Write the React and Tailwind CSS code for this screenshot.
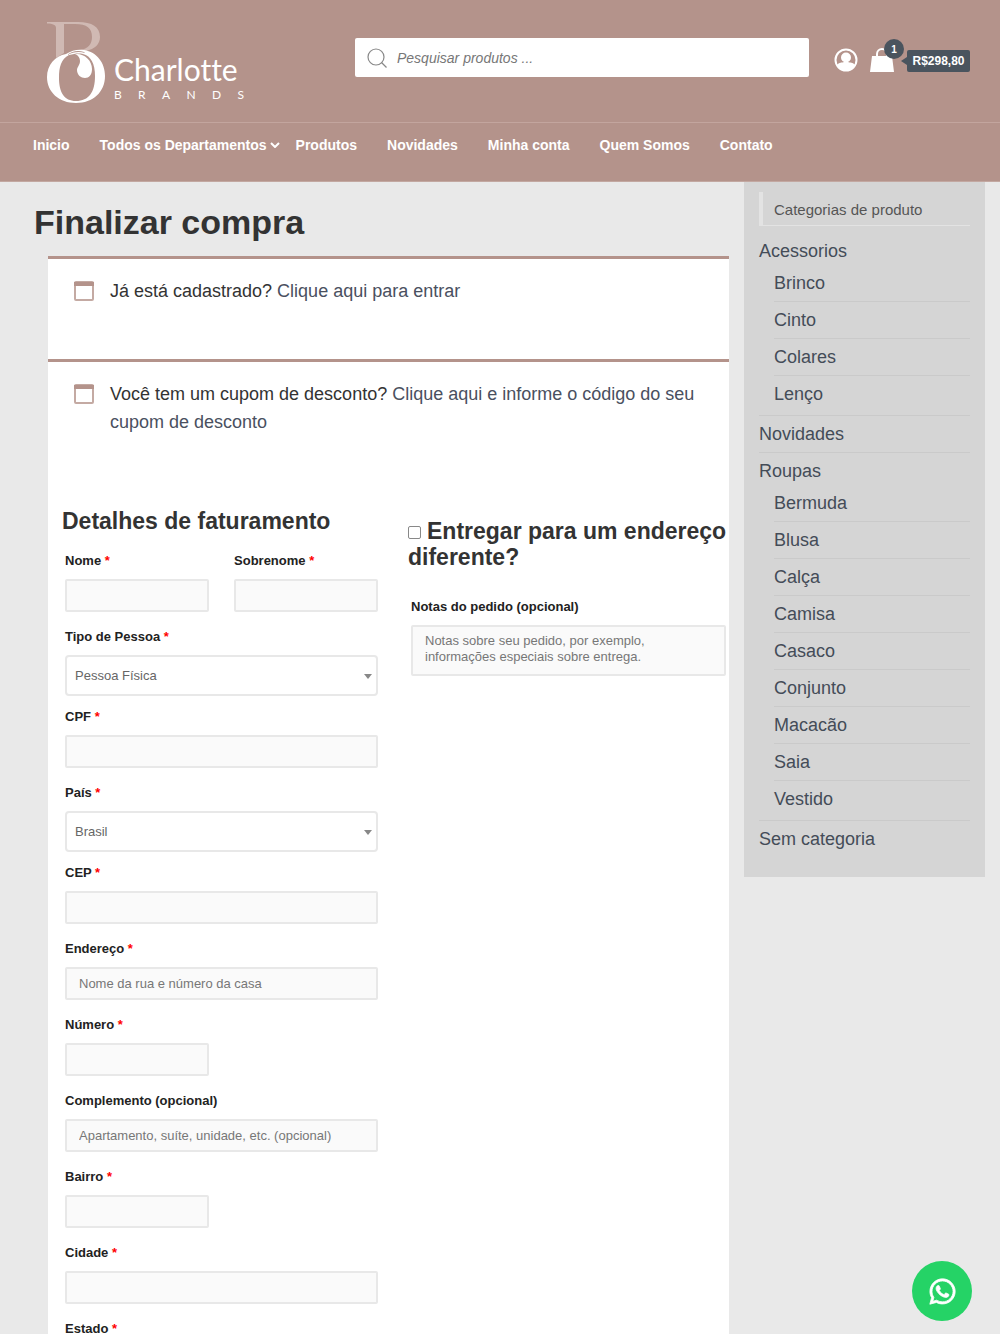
import React from "react";
import { FaWhatsapp } from "react-icons/fa";

const navItems = ["Inicio", "Todos os Departamentos", "Produtos", "Novidades", "Minha conta", "Quem Somos", "Contato"];

const categories = [
  { name: "Acessorios", children: ["Brinco", "Cinto", "Colares", "Lenço"] },
  { name: "Novidades" },
  {
    name: "Roupas",
    children: ["Bermuda", "Blusa", "Calça", "Camisa", "Casaco", "Conjunto", "Macacão", "Saia", "Vestido"],
  },
  { name: "Sem categoria" },
];

function Logo() {
  return (
    <a href="#inicio" aria-label="Charlotte Brands" className="flex w-[200px] shrink-0 text-white">
      <svg width="60" height="86" viewBox="0 0 60 86" aria-hidden="true" className="shrink-0">
        <path
          fill="#d0b9b3"
          d="M0 2h31C45 2 53 7 53 17c0 7-5 12-14 14l-6-1c8-1 12-6 12-13C45 8 40 4 28 4H17v29l-8 5V8C9 5 6 3.500 0 3.500Z"
        />
        <path
          fill="white"
          fillRule="evenodd"
          d="M19 34C25 30 31 29 37 30 50 32 58 43 58 56 58 72 46 83 29 83S0 72 0 57C0 45 8 36 19 34ZM22 35C14 39 12 47 12 58c0 14 5 23 17 23 13 0 19-9 19-25 0-12-4-20-12-22-5-1-9 0-14 1Z"
        />
        <path fill="#b4938b" d="M20 35c6-3 12-4 18-2l-1-1c-6-2-12-1-17 3Z" />
        <path fill="white" d="M28 34c9-1 17 6 17 15 0 6-3 9-7 9s-8-3-8-8c0-3 3-5 3-9 0-3-2-6-5-7Z" />
      </svg>
      <span className="flex flex-col pt-[31px] pl-[7px]">
        <span className="font-['Lato'] text-[30px] leading-9 [font-variant-ligatures:none]">Charlotte</span>
        <span className="flex w-[130px] justify-between font-['Lato'] text-xs leading-[15px]">
          {["B", "R", "A", "N", "D", "S"].map((c) => (
            <span key={c}>{c}</span>
          ))}
        </span>
      </span>
    </a>
  );
}

function Header() {
  return (
    <header className="border-b border-[#c3a8a1] bg-[#b4938b] text-white">
      <div className="flex h-[123px] items-start border-b border-[#c3a59e] pr-[30px] pl-[47px]">
        <div className="w-[308px] shrink-0 pt-5">
          <Logo />
        </div>
        <form className="mt-[38px] flex h-[39px] flex-1 items-center rounded-xs bg-white px-3">
          <svg width="20" height="20" viewBox="0 0 20 20" fill="none" stroke="#888" strokeWidth="1.200" aria-hidden="true">
            <circle cx="9" cy="9" r="8" />
            <path d="M14.500 14.500 19.500 19.500" />
          </svg>
          <input
            type="search"
            aria-label="Pesquisar produtos"
            placeholder="Pesquisar produtos ..."
            className="ml-[10px] min-w-0 flex-1 text-sm text-gray-700 italic outline-none placeholder:text-[#777]"
          />
        </form>
        <a href="#conta" aria-label="Minha conta" className="mt-12 ml-[25px]">
          <svg width="24" height="24" viewBox="0 0 24 24" aria-hidden="true">
            <circle cx="12" cy="12" r="10.500" fill="none" stroke="white" strokeWidth="2" />
            <circle cx="12" cy="9.500" r="5" fill="white" />
            <path fill="white" d="M3 17c2-3 5-2 7-3h4c2 1 5 0 7 3-2 4-5 6-9 6s-7-2-9-6Z" />
          </svg>
        </a>
        <a href="#carrinho" aria-label="Carrinho" className="relative mt-[47px] ml-3 flex">
          <svg width="24" height="26" viewBox="0 0 24 26" aria-hidden="true">
            <path d="M7 10V7a5 5 0 0 1 10 0v3" fill="none" stroke="white" strokeWidth="2" />
            <path d="M2 9h20l2 16H0Z" fill="white" />
          </svg>
          <span className="absolute -top-2 left-[14px] flex size-5 items-center justify-center rounded-full bg-[#4a545e] text-[10px] font-bold">
            1
          </span>
        </a>
        <span className="mt-[50px] ml-[7px] flex items-center">
          <span className="border-y-4 border-r-[6px] border-y-transparent border-r-[#4a545e]" />
          <span className="flex h-[22px] w-[63px] items-center justify-center rounded-xs bg-[#4a545e] text-xs font-bold">
            R$298,80
          </span>
        </span>
      </div>
      <nav className="h-[58px] pt-3 pl-[33px]">
        <ul className="flex text-sm leading-5 font-bold">
          {navItems.map((item, i) => (
            <li key={item} className={i === 1 ? "mr-4" : "mr-[30px]"}>
              <a href="#menu" className="flex items-center whitespace-nowrap">
                {item}
                {i === 1 && (
                  <svg width="10" height="6" viewBox="0 0 10 6" fill="none" stroke="white" strokeWidth="2" className="ml-[3px]" aria-hidden="true">
                    <path d="M1 1l4 4 4-4" />
                  </svg>
                )}
              </a>
            </li>
          ))}
        </ul>
      </nav>
    </header>
  );
}

function Notice({ children }) {
  return (
    <div className="flex min-h-[103px] border-t-3 border-[#b4938b] pt-[18px] pr-8 pl-[26px]">
      <svg width="20" height="20" viewBox="0 0 20 20" aria-hidden="true" className="mt-1 shrink-0">
        <rect x="1" y="1" width="18" height="18" rx="1" fill="white" stroke="#c4aaa3" strokeWidth="2" />
        <path d="M0 1h20v4H0Z" fill="#b4938b" />
      </svg>
      <p className="ml-4 text-lg leading-7 text-[#333]">{children}</p>
    </div>
  );
}

const boxClass =
  "block h-[33px] w-full rounded-xs border-2 border-[#e8e8e8] bg-[#fafafa] px-3 text-[13px] text-gray-700 placeholder:text-[#777]";

function Label({ id, text, required }) {
  return (
    <label htmlFor={id} className="mb-2 block text-[13px] leading-5 font-bold text-[#222]">
      {text}
      {required && <span className="text-[#f00]"> *</span>}
    </label>
  );
}

function Field({ id, label, required = true, placeholder, half }) {
  return (
    <div className={half ? "mb-[15px] w-[46%]" : "mb-[15px]"}>
      <Label id={id} text={label} required={required} />
      <input id={id} type="text" placeholder={placeholder} className={boxClass} />
    </div>
  );
}

function SelectField({ id, label, options }) {
  return (
    <div className="mb-[11px]">
      <Label id={id} text={label} required />
      <div className="relative">
        <select
          id={id}
          className="block h-[41px] w-full appearance-none rounded-sm border-2 border-[#e8e8e8] bg-white px-2 text-[13px] text-[#666]"
        >
          {options.map((o) => (
            <option key={o}>{o}</option>
          ))}
        </select>
        <span className="pointer-events-none absolute top-[19px] right-[6px] border-x-4 border-t-5 border-x-transparent border-t-[#888]" />
      </div>
    </div>
  );
}

function Sidebar() {
  return (
    <aside className="w-[241px] shrink-0 bg-[#d5d5d5] px-[15px] pt-[10px] pb-6 text-[#444c58]">
      <h2 className="mb-[11px] h-[34px] border-b border-l-4 border-[#e3e3e3] pl-[11px] text-[15px] leading-9 text-[#555]">
        Categorias de produto
      </h2>
      <ul className="text-lg leading-7">
        {categories.map((cat, i) => (
          <li
            key={cat.name}
            className={
              (i === 0 ? "" : "pt-1 ") +
              (i === categories.length - 1 ? "" : "border-b border-[#cacaca] ") +
              (cat.children ? "pb-[3px]" : i === 1 ? "pb-1" : "")
            }
          >
            <a href="#categoria">{cat.name}</a>
            {cat.children && (
              <ul className="pl-[15px]">
                {cat.children.map((c) => (
                  <li key={c} className="border-b border-[#cacaca] py-1 last:border-b-0">
                    <a href="#categoria">{c}</a>
                  </li>
                ))}
              </ul>
            )}
          </li>
        ))}
      </ul>
    </aside>
  );
}

export default function App() {
  return (
    <div className="min-h-screen bg-[#e9e9e9] font-['Liberation_Sans',Arial,sans-serif]">
      <Header />
      <div className="flex items-start gap-[15px] pr-[15px]">
        <main className="min-w-0 flex-1 pl-[34px]">
          <h1 className="pt-5 pb-[14px] text-[34px] leading-10 font-bold text-[#333]">Finalizar compra</h1>
          <div className="ml-[14px] bg-white">
            <Notice>
              Já está cadastrado? <a href="#entrar" className="text-[#4a5060]">Clique aqui para entrar</a>
            </Notice>
            <Notice>
              Você tem um cupom de desconto?{" "}
              <a href="#cupom" className="text-[#4a5060]">Clique aqui e informe o código do seu cupom de desconto</a>
            </Notice>
            <form className="grid grid-cols-2 gap-[25px] pt-[46px] pl-[14px]">
              <section>
                <h3 className="mb-[17px] text-[23px] leading-[26px] font-bold text-[#333]">Detalhes de faturamento</h3>
                <div className="pr-[5px] pl-[3px]">
                  <div className="flex justify-between">
                    <Field id="nome" label="Nome" half />
                    <Field id="sobrenome" label="Sobrenome" half />
                  </div>
                  <SelectField id="tipo" label="Tipo de Pessoa " options={["Pessoa Física", "Pessoa Jurídica"]} />
                  <Field id="cpf" label="CPF " />
                  <SelectField id="pais" label="País" options={["Brasil"]} />
                  <Field id="cep" label="CEP" />
                  <Field id="endereco" label="Endereço" placeholder="Nome da rua e número da casa" />
                  <Field id="numero" label="Número" half />
                  <Field id="complemento" label="Complemento (opcional)" required={false} placeholder="Apartamento, suíte, unidade, etc. (opcional)" />
                  <Field id="bairro" label="Bairro" half />
                  <Field id="cidade" label="Cidade" />
                  <SelectField id="estado" label="Estado" options={["São Paulo"]} />
                </div>
              </section>
              <section className="pt-[10px]">
                <h3 className="text-[23px] leading-[26px] font-bold text-[#333]">
                  <label>
                    <input type="checkbox" className="mr-[6px] size-[13px] appearance-none rounded-xs border border-[#888] bg-white checked:bg-[#b4938b]" />
                    Entregar para um endereço diferente?
                  </label>
                </h3>
                <div className="mt-[27px] px-[3px]">
                  <Label id="notas" text="Notas do pedido (opcional)" />
                  <textarea
                    id="notas"
                    placeholder="Notas sobre seu pedido, por exemplo, informações especiais sobre entrega."
                    className="block h-[51px] w-full resize-none rounded-xs border-2 border-[#e8e8e8] bg-[#fafafa] py-[6px] pr-10 pl-3 text-[13px] leading-4 text-gray-700 placeholder:text-[#777]"
                  />
                </div>
              </section>
            </form>
          </div>
        </main>
        <Sidebar />
      </div>
      <a
        href="#whatsapp"
        aria-label="WhatsApp"
        className="fixed right-7 bottom-[13px] flex size-[60px] items-center justify-center rounded-full bg-[#25d366] text-white"
      >
        <FaWhatsapp size={29} stroke="white" strokeWidth={14} />
      </a>
    </div>
  );
}
